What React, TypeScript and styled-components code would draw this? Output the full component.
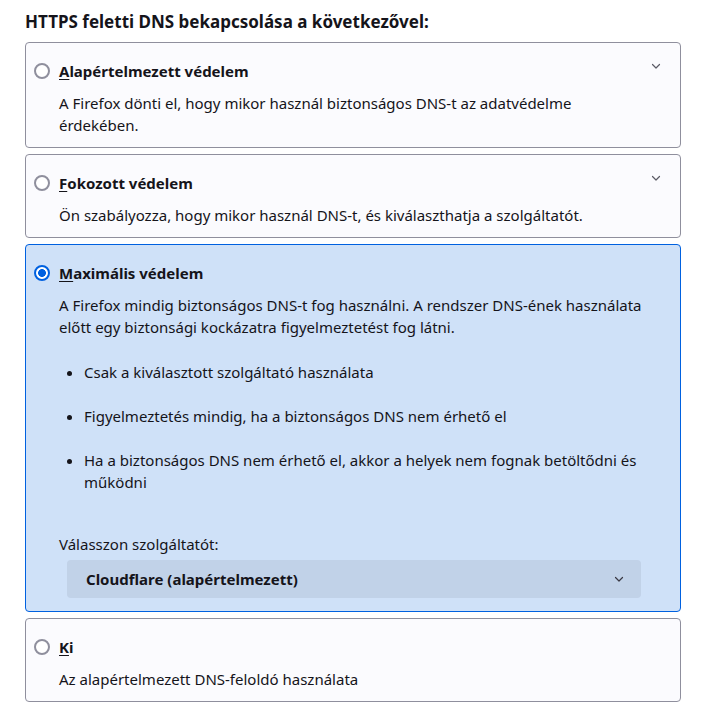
import React from "react";
import styled, { createGlobalStyle } from "styled-components";

const GlobalStyle = createGlobalStyle`
  html, body {
    margin: 0;
    padding: 0;
    background: #ffffff;
  }
  body {
    font-family: "Noto Sans", "Open Sans", sans-serif;
    color: #15141a;
    font-size: 15px;
  }
`;

const Page = styled.div`
  padding: 11px 29px 12px 25px;
`;

const Heading = styled.h2`
  margin: 0 0 9px 0;
  font-size: 17px;
  line-height: 22px;
  font-weight: 700;
`;

const Options = styled.div`
  display: flex;
  flex-direction: column;
  gap: 6px;
`;

const Card = styled.div<{ $selected?: boolean }>`
  display: flex;
  align-items: flex-start;
  border: 1px solid ${(p) => (p.$selected ? "#0061e0" : "#8f8f9d")};
  border-radius: 4px;
  background: ${(p) => (p.$selected ? "#cfe1f8" : "#fbfbfe")};
  padding: 17px 8px 11px 8px;
`;

const Radio = styled.span<{ $checked?: boolean }>`
  box-sizing: border-box;
  flex: none;
  width: 16px;
  height: 16px;
  margin: 3px 9px 0 0;
  border-radius: 50%;
  border: 2px solid ${(p) => (p.$checked ? "#0061e0" : "#8f8f9d")};
  background: ${(p) =>
    p.$checked
      ? "radial-gradient(circle, #0061e0 0 3.6px, #ffffff 4.2px)"
      : "#ffffff"};
`;

const Content = styled.div`
  flex: 1;
  min-width: 0;
`;

const Title = styled.div`
  font-weight: 700;
  line-height: 22px;
`;

const Description = styled.p`
  margin: 10px 0 0 0;
  line-height: 22px;
`;

const BulletList = styled.ul`
  margin: 23px 0 0 0;
  padding-left: 25px;
  line-height: 22px;
`;

const Bullet = styled.li`
  & + & {
    margin-top: 22px;
  }
`;

const ProviderLabel = styled.div`
  margin-top: 40px;
  line-height: 22px;
`;

const Select = styled.div`
  margin: 5px 3px 2px 8px;
  height: 38px;
  box-sizing: border-box;
  display: flex;
  align-items: center;
  justify-content: space-between;
  padding: 0 16px 0 19px;
  border-radius: 4px;
  background: rgba(21, 20, 26, 0.07);
  font-weight: 700;
`;

const ChevronSlot = styled.div`
  flex: none;
  width: 28px;
  height: 12px;
  display: flex;
  justify-content: flex-start;
  align-items: center;
  padding-left: 6px;
  box-sizing: border-box;
`;

const Chevron = ({ color = "#5b5b66" }: { color?: string }) => (
  <svg width="12" height="12" viewBox="0 0 12 12" aria-hidden="true">
    <path
      d="M2.5 4.5 L6 8 L9.5 4.5"
      fill="none"
      stroke={color}
      strokeWidth="1.2"
      strokeLinecap="round"
      strokeLinejoin="round"
    />
  </svg>
);

const AccessKey = styled.u`
  text-decoration-thickness: 1px;
  text-underline-offset: 2px;
`;

type Option = {
  key: string;
  rest: string;
  description: string;
  selected?: boolean;
  expandable?: boolean;
};

const options: Option[] = [
  {
    key: "A",
    rest: "lapértelmezett védelem",
    description:
      "A Firefox dönti el, hogy mikor használ biztonságos DNS-t az adatvédelme érdekében.",
    expandable: true,
  },
  {
    key: "F",
    rest: "okozott védelem",
    description:
      "Ön szabályozza, hogy mikor használ DNS-t, és kiválaszthatja a szolgáltatót.",
    expandable: true,
  },
  {
    key: "M",
    rest: "aximális védelem",
    description:
      "A Firefox mindig biztonságos DNS-t fog használni. A rendszer DNS-ének használata előtt egy biztonsági kockázatra figyelmeztetést fog látni.",
    selected: true,
  },
  {
    key: "K",
    rest: "i",
    description: "Az alapértelmezett DNS-feloldó használata",
  },
];

const bullets = [
  "Csak a kiválasztott szolgáltató használata",
  "Figyelmeztetés mindig, ha a biztonságos DNS nem érhető el",
  "Ha a biztonságos DNS nem érhető el, akkor a helyek nem fognak betöltődni és működni",
];

export default function App() {
  return (
    <>
      <GlobalStyle />
      <Page>
        <Heading>HTTPS feletti DNS bekapcsolása a következővel:</Heading>
        <Options>
          {options.map((o) => (
            <Card key={o.key} $selected={o.selected}>
              <Radio $checked={o.selected} />
              <Content>
                <Title>
                  <AccessKey>{o.key}</AccessKey>
                  {o.rest}
                </Title>
                <Description>{o.description}</Description>
                {o.selected && (
                  <>
                    <BulletList>
                      {bullets.map((b) => (
                        <Bullet key={b}>{b}</Bullet>
                      ))}
                    </BulletList>
                    <ProviderLabel>Válasszon szolgáltatót:</ProviderLabel>
                    <Select>
                      <span>Cloudflare (alapértelmezett)</span>
                      <Chevron color="#3a3944" />
                    </Select>
                  </>
                )}
              </Content>
              <ChevronSlot>{o.expandable && <Chevron />}</ChevronSlot>
            </Card>
          ))}
        </Options>
      </Page>
    </>
  );
}
